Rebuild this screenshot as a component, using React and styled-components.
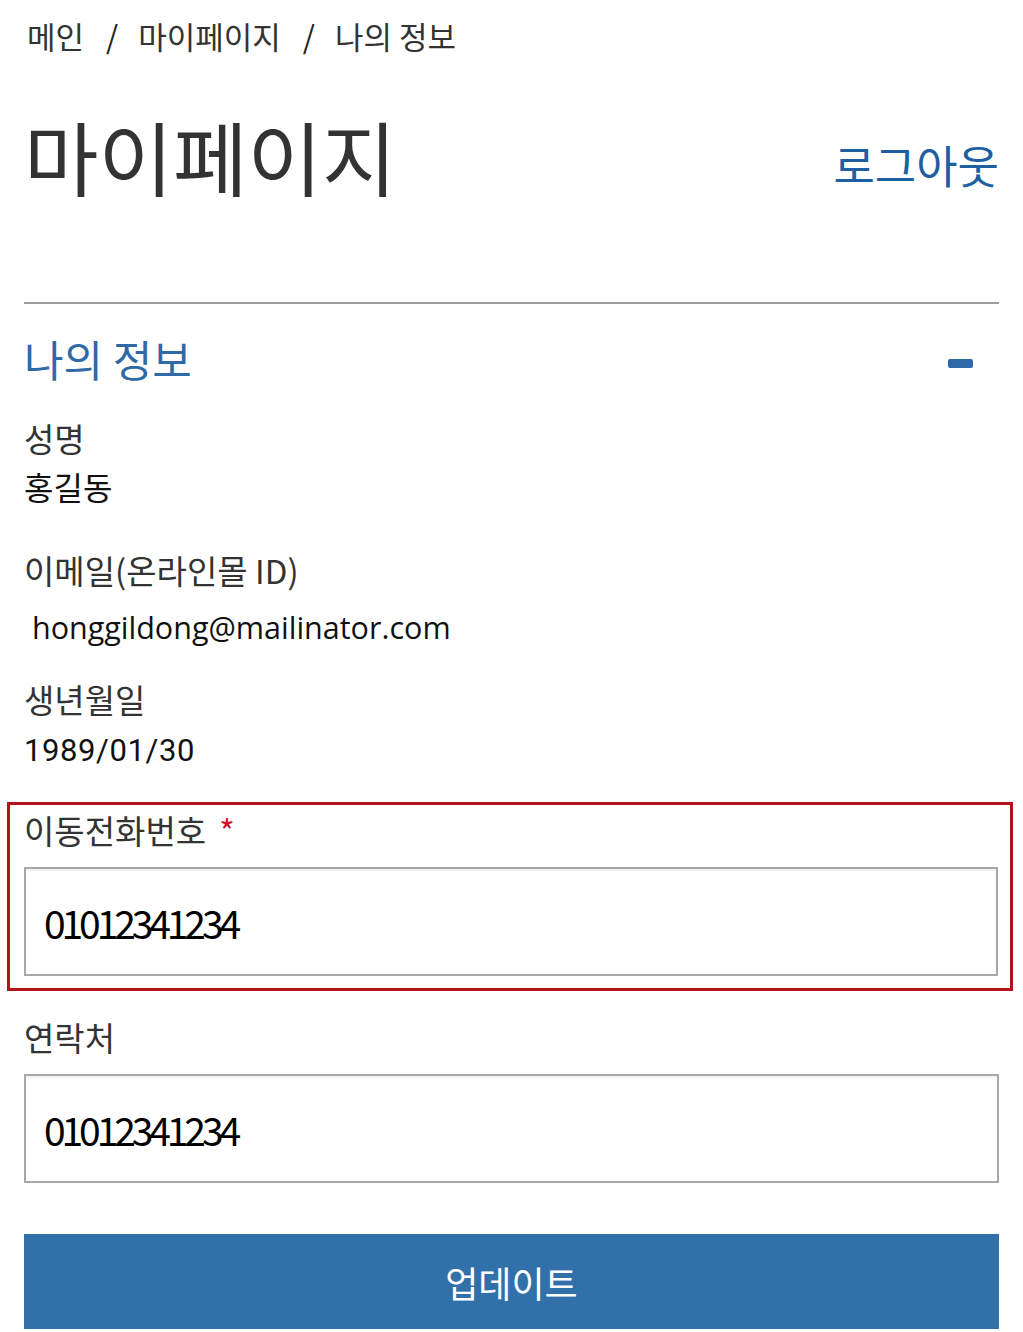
import React from "react";
import styled, { createGlobalStyle } from "styled-components";

const GlobalStyle = createGlobalStyle`
  body {
    margin: 0;
    background: #fff;
    font-family: "Noto Sans CJK KR", "Noto Sans", sans-serif;
    color: #333;
  }
`;

export default function App() {
  return (
    <>
      <GlobalStyle />
      <Page>
        <Breadcrumb>
          <span>메인</span>
          <Sep>/</Sep>
          <span>마이페이지</span>
          <Sep>/</Sep>
          <span>나의 정보</span>
        </Breadcrumb>

        <Header>
          <Title>마이페이지</Title>
          <Logout href="#">로그아웃</Logout>
        </Header>

        <Divider />

        <SectionHead>
          <SectionTitle>나의 정보</SectionTitle>
          <Collapse aria-label="접기" />
        </SectionHead>

        <Field $top={28}>
          <Label>성명</Label>
          <Value>홍길동</Value>
        </Field>

        <Field $top={36}>
          <Label>이메일(온라인몰 ID)</Label>
          <Value $latin $gap={9}>&nbsp;honggildong@mailinator.com</Value>
        </Field>

        <Field $top={24}>
          <Label>생년월일</Label>
          <Value $digits $gap={4}>1989/01/30</Value>
        </Field>

        <Highlight>
          <Label>
            이동전화번호<Required>*</Required>
          </Label>
          <Input defaultValue="01012341234" />
        </Highlight>

        <Field $top={22}>
          <Label>연락처</Label>
          <Input defaultValue="01012341234" />
        </Field>

        <Button type="button">업데이트</Button>
      </Page>
    </>
  );
}

const Page = styled.div`
  padding: 16px 24px 2px;
  display: flex;
  flex-direction: column;
`;

const Breadcrumb = styled.nav`
  padding-left: 3px;
  font-size: 31px;
  line-height: 40px;
  color: #333;
  display: flex;
  align-items: center;
`;

const Sep = styled.span`
  margin: 0 20px 0 22px;
  color: #222;
`;

const Header = styled.div`
  margin-top: 49px;
  display: flex;
  align-items: center;
  justify-content: space-between;
`;

const Title = styled.h1`
  margin: 0;
  font-size: 81px;
  line-height: 100px;
  font-weight: 400;
  color: #333;
`;

const Logout = styled.a`
  margin-top: 19px;
  font-size: 45px;
  line-height: 56px;
  color: #1e5fa2;
  text-decoration: none;
`;

const Divider = styled.hr`
  margin: 97px 0 0;
  border: 0;
  height: 2px;
  background: #9c9c9c;
`;

const SectionHead = styled.div`
  margin-top: 26px;
  display: flex;
  align-items: center;
  justify-content: space-between;
`;

const SectionTitle = styled.h2`
  margin: 0;
  font-size: 43px;
  line-height: 56px;
  font-weight: 400;
  color: #2f6aa6;
`;

const Collapse = styled.span`
  margin: 11px 26px 0 0;
  width: 25px;
  height: 9px;
  border-radius: 2px;
  background: #2f6aa8;
`;

const Field = styled.div`
  margin-top: ${(p) => p.$top}px;
  display: flex;
  flex-direction: column;
`;

const Label = styled.label`
  font-size: 33px;
  line-height: 48px;
  color: #333;
`;

const Value = styled.div`
  margin-top: ${(p) => p.$gap || 0}px;
  font-size: ${(p) => (p.$latin ? 30.5 : p.$digits ? 31 : 32)}px;
  letter-spacing: ${(p) => (p.$digits ? 0.6 : 0)}px;
  line-height: 48px;
  color: #111;
  font-family: ${(p) =>
    p.$latin
      ? `"Open Sans", "Noto Sans CJK KR", sans-serif`
      : p.$digits
      ? `Roboto, "Noto Sans CJK KR", sans-serif`
      : `"Noto Sans CJK KR", sans-serif`};
`;

const Highlight = styled.div`
  margin: 27px -14px 0 -17px;
  padding: 1px 12px 12px 14px;
  border: 3px solid #b3121b;
  display: flex;
  flex-direction: column;
`;

const Required = styled.span`
  margin-left: 13px;
  color: #d0112b;
`;

const Input = styled.input`
  margin-top: 13px;
  box-sizing: border-box;
  width: 100%;
  height: 109px;
  padding: 0 18px;
  border: 2px solid #a8a8a8;
  border-radius: 0;
  box-shadow: inset 0 2px 2px rgba(0, 0, 0, 0.06);
  font-family: "Noto Sans CJK KR", sans-serif;
  font-size: 39px;
  letter-spacing: -4.1px;
  color: #000;
  background: #fff;
  outline: none;
`;

const Button = styled.button`
  margin-top: 51px;
  height: 95px;
  border: 0;
  background: #3170a8;
  color: #fff;
  font-family: "Noto Sans CJK KR", sans-serif;
  font-size: 36px;
  cursor: pointer;
`;
